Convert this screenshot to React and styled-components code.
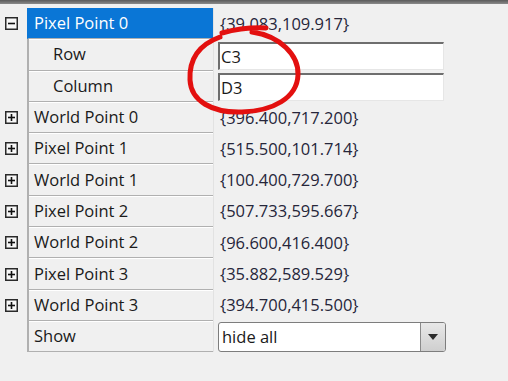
import React from 'react';
import styled, { createGlobalStyle } from 'styled-components';

const GlobalStyle = createGlobalStyle`
  html, body {
    margin: 0;
    padding: 0;
    background: #f0f0f0;
  }
  body {
    font-family: "Open Sans", "Noto Sans", "Liberation Sans", sans-serif;
  }
`;

const rows = [
  { name: 'Pixel Point 0', value: '{39.083,109.917}', expander: 'minus', selected: true },
  { name: 'Row', edit: 'C3', child: true },
  { name: 'Column', edit: 'D3', child: true },
  { name: 'World Point 0', value: '{396.400,717.200}', expander: 'plus' },
  { name: 'Pixel Point 1', value: '{515.500,101.714}', expander: 'plus' },
  { name: 'World Point 1', value: '{100.400,729.700}', expander: 'plus' },
  { name: 'Pixel Point 2', value: '{507.733,595.667}', expander: 'plus' },
  { name: 'World Point 2', value: '{96.600,416.400}', expander: 'plus' },
  { name: 'Pixel Point 3', value: '{35.882,589.529}', expander: 'plus' },
  { name: 'World Point 3', value: '{394.700,415.500}', expander: 'plus' },
  { name: 'Show', select: 'hide all' },
];

const Expander = ({ kind }) => (
  <svg width="13" height="13" viewBox="0 0 13 13">
    <rect x="0.75" y="0.75" width="11.5" height="11.5" fill="#f7f7f7" stroke="#2a2a2a" strokeWidth="1.5" />
    <line x1="3" y1="6.5" x2="10" y2="6.5" stroke="#111" strokeWidth="1.6" />
    {kind === 'plus' && <line x1="6.5" y1="3" x2="6.5" y2="10" stroke="#111" strokeWidth="1.6" />}
  </svg>
);

export default function App() {
  return (
    <Page>
      <GlobalStyle />
      <TopBar />
      <Grid>
        {rows.map((r) => (
          <Row key={r.name}>
            <ExpCell>{r.expander && <Expander kind={r.expander} />}</ExpCell>
            <NameCell $selected={r.selected} $child={r.child}>
              {r.name}
            </NameCell>
            <ValueCell>
              {r.value && <ValueText>{r.value}</ValueText>}
              {r.edit && <EditBox>{r.edit}</EditBox>}
              {r.select && (
                <Select>
                  <SelectText>{r.select}</SelectText>
                  <SelectButton>
                    <svg width="10" height="6" viewBox="0 0 10 6">
                      <path d="M0 0 H10 L5 6 Z" fill="#2b2b2b" />
                    </svg>
                  </SelectButton>
                </Select>
              )}
            </ValueCell>
          </Row>
        ))}
      </Grid>
      <Annotation width="508" height="381" viewBox="0 0 508 381">
        <path
          d="M 222 33 Q 244 27 266 28
             M 252 32 C 280 36 299 55 298 75 C 297 98 273 111 242 112
             C 212 113 191 101 190 80 C 189 60 198 45 220 37"
          fill="none"
          stroke="#e3100f"
          strokeWidth="5"
          strokeLinecap="round"
          strokeLinejoin="round"
        />
      </Annotation>
    </Page>
  );
}

const Page = styled.div`
  position: relative;
  width: 508px;
  height: 381px;
  background: #f0f0f0;
  overflow: hidden;
`;

const TopBar = styled.div`
  height: 4px;
  background: linear-gradient(#5a5a5a, #8a8a8a);
`;

const Grid = styled.div`
  display: flex;
  flex-direction: column;
  padding-top: 4px;
`;

const Row = styled.div`
  display: grid;
  grid-template-columns: 27px 186px 1fr;
  height: 31.3px;
`;

const ExpCell = styled.div`
  display: flex;
  align-items: center;
  padding-left: 5px;
`;

const NameCell = styled.div`
  box-sizing: border-box;
  display: flex;
  align-items: center;
  padding-left: ${(p) => (p.$child ? '24px' : '5px')};
  padding-bottom: 1px;
  font-size: 16.5px;
  color: ${(p) => (p.$selected ? '#ffffff' : '#1a1a1a')};
  background: ${(p) => (p.$selected ? '#0a76d6' : 'transparent')};
  border-left: 2px solid ${(p) => (p.$selected ? '#0a76d6' : '#b0b0b0')};
  border-bottom: 1px solid #b0b0b0;
  box-shadow: ${(p) => (p.$selected ? 'none' : 'inset 0 1px 0 #ffffff')};
`;

const ValueCell = styled.div`
  display: flex;
  align-items: center;
  padding-left: 4px;
  border-left: 1px solid #e2e2e2;
`;

const ValueText = styled.span`
  font-size: 16.5px;
  color: #26263a;
  padding-left: 2px;
  padding-bottom: 1px;
`;

const EditBox = styled.div`
  box-sizing: border-box;
  width: 226px;
  height: 28px;
  margin-top: 2px;
  display: flex;
  align-items: center;
  padding-left: 1px;
  background: #ffffff;
  border-top: 2px solid #6e6e6e;
  border-left: 2px solid #6e6e6e;
  border-right: 1px solid #e6e6e6;
  border-bottom: 1px solid #e6e6e6;
  font-size: 16.5px;
  color: #1a1a1a;
`;

const Select = styled.div`
  box-sizing: border-box;
  width: 228px;
  height: 30px;
  display: flex;
  background: #ffffff;
  border: 1px solid #7d7d7d;
  border-radius: 3px;
  overflow: hidden;
`;

const SelectText = styled.div`
  flex: 1;
  display: flex;
  align-items: center;
  padding-left: 3px;
  padding-bottom: 1px;
  font-size: 16.5px;
  color: #1a1a1a;
`;

const SelectButton = styled.div`
  width: 24px;
  display: flex;
  align-items: center;
  justify-content: center;
  border-left: 1px solid #8a8a8a;
  background: linear-gradient(#e8e8e8, #cfcfcf);
`;

const Annotation = styled.svg`
  position: absolute;
  left: 0;
  top: 0;
  pointer-events: none;
`;
